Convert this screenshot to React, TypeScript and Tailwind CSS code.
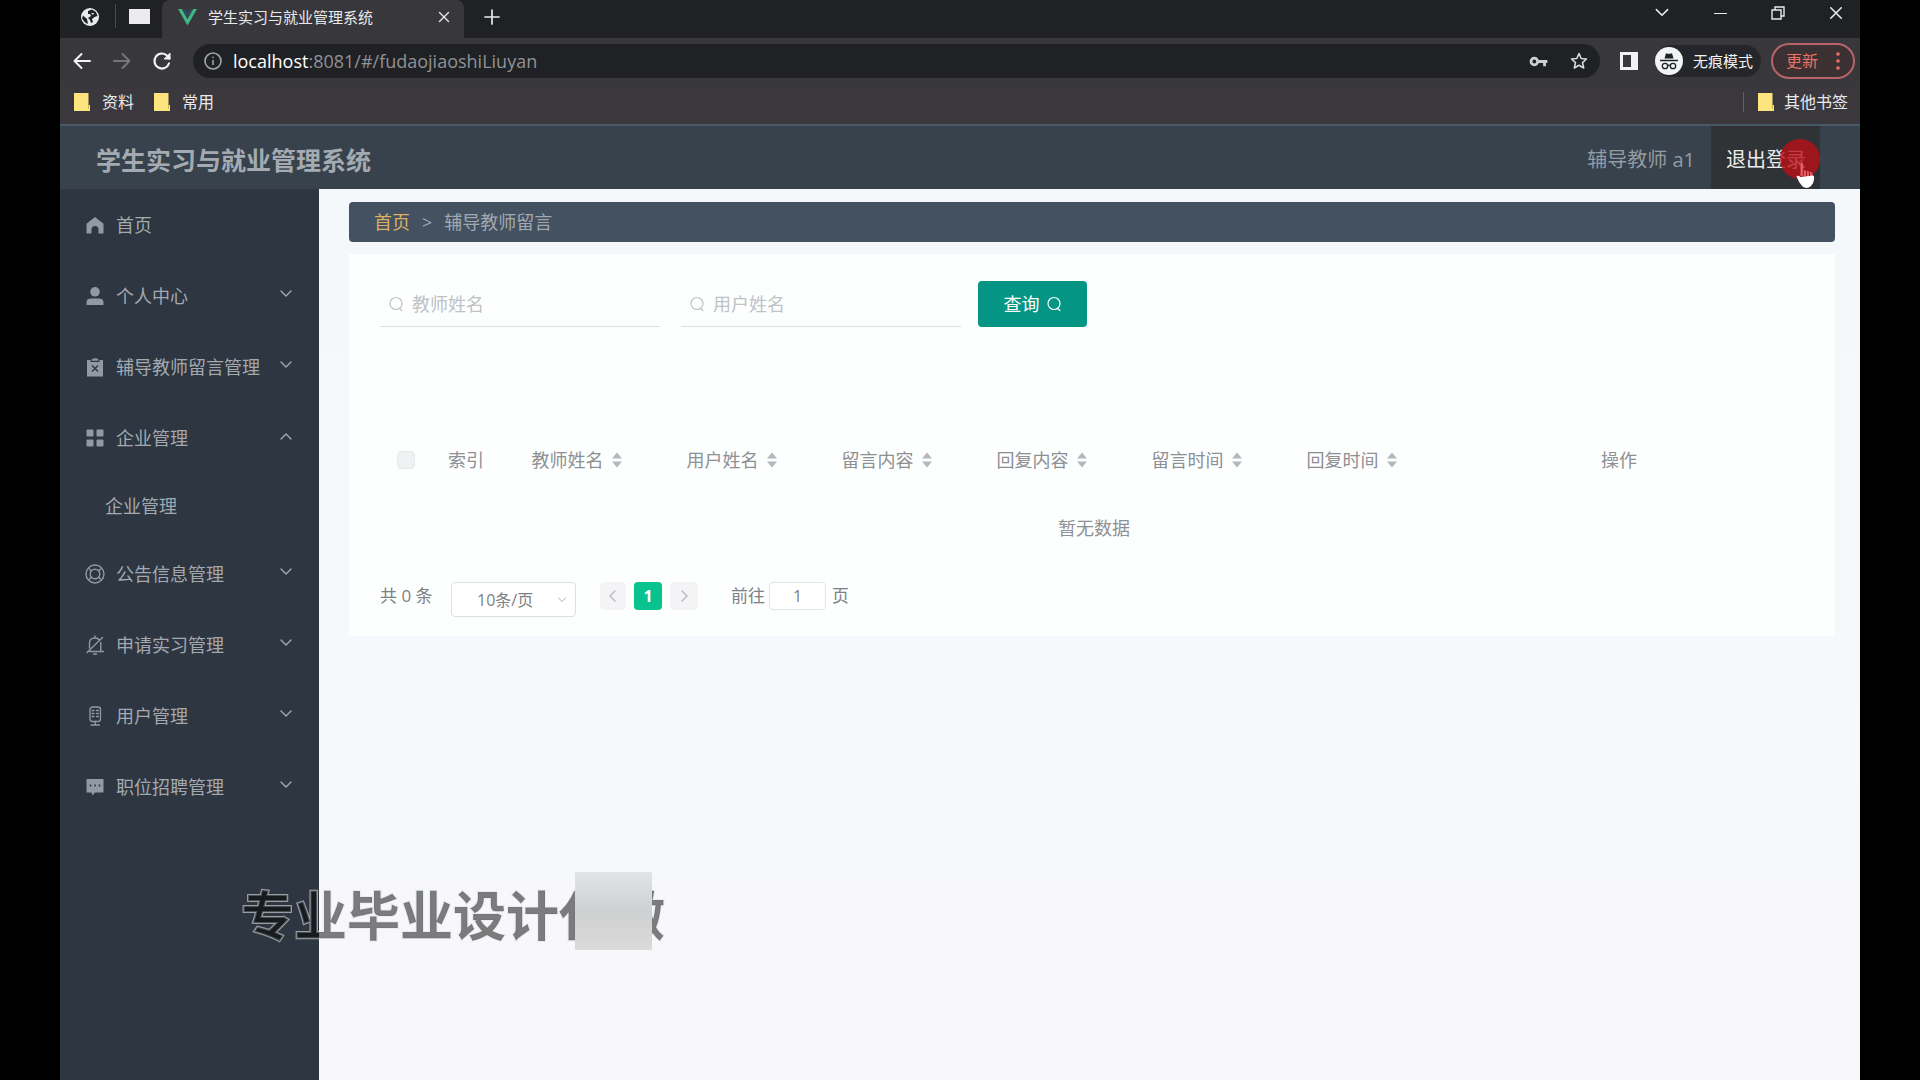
import React from "react";

type IconProps = { className?: string };

const svgBase = {
  fill: "none",
  stroke: "currentColor",
  strokeLinecap: "round" as const,
  strokeLinejoin: "round" as const,
  "aria-hidden": true,
};

function Chevron({ className = "", dir }: IconProps & { dir: "up" | "down" | "left" | "right" }) {
  const paths = {
    up: "M3 11l5-5 5 5",
    down: "M3 5l5 5 5-5",
    left: "M10 3L5 8l5 5",
    right: "M6 3l5 5-5 5",
  };
  return (
    <svg viewBox="0 0 16 16" {...svgBase} strokeWidth={1.4} className={className}>
      <path d={paths[dir]} />
    </svg>
  );
}

function GlobeIcon() {
  return (
    <svg viewBox="0 0 20 20" className="size-5" aria-hidden>
      <circle cx="10" cy="10" r="9" fill="#e8eaed" />
      <path d="M3 8.500l4 3.500 1 5-3-1.500-3-4z" fill="#202124" />
      <path d="M8 4l4-1.500 4 2.500 1.500 4-3 1-2.500 2 1 3-2 1-1-3-2-2 3-2-1-2h-2z" fill="#202124" />
      <path d="M11 6l3 0-1 2z" fill="#e8eaed" />
    </svg>
  );
}

function VueLogo() {
  return (
    <svg viewBox="0 0 20 18" className="h-[17px] w-[19px]" aria-hidden>
      <path d="M0 0h4l6 10.500L16 0h4L10 17.500z" fill="#41b883" />
      <path d="M4 0h3.600L10 4.200 12.400 0H16l-6 10.500z" fill="#35495e" />
    </svg>
  );
}

function CloseIcon({ className = "" }: IconProps) {
  return (
    <svg viewBox="0 0 16 16" {...svgBase} className={className} strokeWidth={1.8}>
      <path d="M2 2l12 12M14 2L2 14" />
    </svg>
  );
}

function SearchIcon({ className = "" }: IconProps) {
  return (
    <svg viewBox="0 0 16 16" {...svgBase} className={className} strokeWidth={1.2}>
      <circle cx="8" cy="7.500" r="6" />
      <path d="M11.500 12.500l2.500 2" />
    </svg>
  );
}

function HomeIcon() {
  return (
    <svg viewBox="0 0 18 18" className="size-[18px]" fill="currentColor" aria-hidden>
      <path d="M9 1L0.500 7.800V17.500H5.500V13.500Q5.500 10 9 10T12.500 13.500V17.500H17.500V7.800z" />
    </svg>
  );
}

function UserIcon() {
  return (
    <svg viewBox="0 0 18 18" className="size-[18px]" fill="currentColor" aria-hidden>
      <circle cx="9" cy="4.800" r="4.800" />
      <path d="M0.500 18v-2.500Q0.500 11.500 5 11.500h8q4.500 0 4.500 4V18z" />
    </svg>
  );
}

function ClipboardIcon() {
  return (
    <svg viewBox="0 0 18 20" className="h-5 w-[18px]" aria-hidden>
      <path d="M1 3h3.500v2h9V3H17v16.500H1z" fill="currentColor" />
      <path d="M5.500 3.800V2.500Q9 0 12.500 2.500v1.300z" fill="currentColor" />
      <path d="M6 8.500l6 6M12 8.500l-6 6" stroke="#2d3641" strokeWidth="1.400" />
    </svg>
  );
}

function GridIcon() {
  return (
    <svg viewBox="0 0 18 18" className="size-[18px]" fill="currentColor" aria-hidden>
      <rect x="0.500" y="0.500" width="7" height="7" rx="1" />
      <rect x="10.500" y="0.500" width="7" height="7" rx="1" />
      <rect x="0.500" y="10.500" width="7" height="7" rx="1" />
      <rect x="10.500" y="10.500" width="7" height="7" rx="1" />
    </svg>
  );
}

function HelpRingIcon() {
  return (
    <svg viewBox="0 0 20 20" {...svgBase} className="size-5" strokeWidth={1.4}>
      <circle cx="10" cy="10" r="9" />
      <circle cx="10" cy="10" r="4.800" />
      <path d="M4.500 5l2 2M15.500 5l-2 2M4.500 15l2-2M15.500 15l-2-2" />
    </svg>
  );
}

function MuteBellIcon() {
  return (
    <svg viewBox="0 0 18 20" {...svgBase} className="h-5 w-[18px]" strokeWidth={1.4}>
      <path d="M3.500 13V8.500Q3.500 3 9 3q3 0 4.500 2M14.800 7.500V16.500M3.500 16.500h14M9 1v2M7.500 19h3M16.500 2.500L1 17.500" />
    </svg>
  );
}

function MicIcon() {
  return (
    <svg viewBox="0 0 18 20" {...svgBase} className="h-5 w-[18px]" strokeWidth={1.3}>
      <rect x="4" y="1" width="10.500" height="14.500" rx="2.500" />
      <path d="M6 4.500h2M10.500 4.500h2M6 7.500h2M10.500 7.500h2M6 10.500h2M10.500 10.500h2M9.200 15.500v3.500M5 19h8.500" />
    </svg>
  );
}

function ChatIcon() {
  return (
    <svg viewBox="0 0 18 18" className="size-[18px]" aria-hidden>
      <path d="M0.500 1h17v13.500H9L6.500 17.500 5.500 14.500h-5z" fill="currentColor" />
      <path d="M4.500 6.500v2M9 6.500v2M13.500 6.500v2" stroke="#2d3641" strokeWidth="1.500" />
    </svg>
  );
}

function FolderIcon() {
  return (
    <svg viewBox="0 0 16 18" className="h-[18px] w-4" aria-hidden>
      <path d="M0 0h14.500v12H16v6H0z" fill="#fce57e" />
      <path d="M14.500 12v4" stroke="#d9b84a" strokeWidth="1" />
    </svg>
  );
}

function KeyIcon() {
  return (
    <svg viewBox="0 0 20 14" className="h-[13px] w-[19px]" aria-hidden>
      <circle cx="5.500" cy="7" r="3.600" fill="none" stroke="#d0d1d4" strokeWidth="3" />
      <path d="M10 5.500h9.500v3H18V12h-3V8.500h-5z" fill="#d0d1d4" />
    </svg>
  );
}

function StarIcon() {
  return (
    <svg viewBox="0 0 18 18" {...svgBase} className="size-[18px] text-[#d8d9dc]" strokeWidth={1.6}>
      <path d="M9 1.500l2.200 5 5.300.5-4 3.600 1.200 5.400L9 13.200 4.300 16l1.200-5.400-4-3.600 5.300-.5z" />
    </svg>
  );
}

function IncognitoIcon() {
  return (
    <svg viewBox="0 0 28 28" className="size-7" aria-hidden>
      <circle cx="14" cy="14" r="14" fill="#f1f3f4" />
      <path d="M9.500 11.500l1.500-5.300q3 1 6 0l1.500 5.300z" fill="#202124" />
      <path d="M5 13.500h18" stroke="#202124" strokeWidth="1.500" />
      <circle cx="10" cy="19" r="2.700" fill="none" stroke="#202124" strokeWidth="1.300" />
      <circle cx="18" cy="19" r="2.700" fill="none" stroke="#202124" strokeWidth="1.300" />
      <path d="M12.700 18.500q1.300-.8 2.600 0" fill="none" stroke="#202124" strokeWidth="1.200" />
    </svg>
  );
}

function SortCarets() {
  return (
    <svg viewBox="0 0 10 16" className="h-4 w-[10px] text-[#b4b8bd]" fill="currentColor" aria-hidden>
      <path d="M5 0.500l5 6H0zM5 15.500l5-6H0z" />
    </svg>
  );
}

function HandCursor() {
  return (
    <svg viewBox="0 0 20 28" className="h-7 w-5" aria-hidden>
      <path
        d="M5.500 15V3.500q0-2 1.300-2t1.300 2V10q2.500-1.500 3 .5 2.500-1.500 3 .8 3-1 3.400 1.200V16z"
        fill="#e0606a"
      />
      <path d="M8.300 10v5M11.500 10.500v4.500M14.500 11.500V15" stroke="#a8121c" strokeWidth="1" />
      <path
        d="M1.500 15.500q1.500-1.500 4 .5l12.500-1.500q1.500 0 1 4-.5 4.500-3 6.500Q12 28.500 7.500 25.500 4 22 1.500 15.500z"
        fill="#fff"
      />
    </svg>
  );
}

const menu = [
  { label: "首页", icon: <HomeIcon />, arrow: false },
  { label: "个人中心", icon: <UserIcon />, arrow: true },
  { label: "辅导教师留言管理", icon: <ClipboardIcon />, arrow: true },
  { label: "企业管理", icon: <GridIcon />, arrow: true, children: ["企业管理"] },
  { label: "公告信息管理", icon: <HelpRingIcon />, arrow: true },
  { label: "申请实习管理", icon: <MuteBellIcon />, arrow: true },
  { label: "用户管理", icon: <MicIcon />, arrow: true },
  { label: "职位招聘管理", icon: <ChatIcon />, arrow: true },
];

const columns = ["教师姓名", "用户姓名", "留言内容", "回复内容", "留言时间", "回复时间"];

function TabStrip() {
  return (
    <div className="flex h-[38px] bg-[#202124] text-[#e8eaed]">
      <button aria-label="网页" className="flex w-[55px] items-center justify-center pb-1 pl-1">
        <GlobeIcon />
      </button>
      <div className="mt-1 h-6 w-px bg-[#4a4b4f]" />
      <button aria-label="窗口" className="flex w-[46px] items-start justify-center pt-[9px]">
        <span className="h-[15px] w-[21px] bg-[#ececee]" />
      </button>
      <div className="flex w-[302px] items-center rounded-t-lg bg-[#38373b] pr-3 pb-1 pl-4">
        <VueLogo />
        <span className="ml-[11px] flex-1 text-[15px] leading-5 whitespace-nowrap">学生实习与就业管理系统</span>
        <button aria-label="关闭标签页" className="p-[2px]">
          <CloseIcon className="size-3" />
        </button>
      </div>
      <button aria-label="新标签页" className="flex w-[56px] items-center justify-center pb-1">
        <svg viewBox="0 0 16 16" {...svgBase} strokeWidth={1.7} className="size-4">
          <path d="M8 1v14M1 8h14" />
        </svg>
      </button>
      <div className="ml-auto flex pb-3">
        <button aria-label="搜索标签页" className="flex w-[58px] items-center justify-center">
          <Chevron dir="down" className="size-[18px]" />
        </button>
        <button aria-label="最小化" className="flex w-[58px] items-center justify-center">
          <span className="h-px w-[13px] bg-[#e8eaed]" />
        </button>
        <button aria-label="还原" className="flex w-[58px] items-center justify-center">
          <svg viewBox="0 0 14 14" fill="none" stroke="currentColor" strokeWidth={1.4} className="size-[14px]" aria-hidden>
            <path d="M1 4h9v9H1zM4 4V1h9v9h-3" />
          </svg>
        </button>
        <button aria-label="关闭" className="flex w-[53px] items-center justify-center pl-1">
          <CloseIcon className="size-[14px]" />
        </button>
      </div>
    </div>
  );
}

function Toolbar() {
  return (
    <div className="flex h-[46px] items-center bg-[#38373b] pr-[5px] pl-3 text-[#f1f3f4]">
      <div className="flex w-[121px] gap-5">
        <button aria-label="后退">
          <svg viewBox="0 0 20 20" {...svgBase} strokeWidth={2} className="size-5">
            <path d="M18 10H2.500M9.500 3l-7 7 7 7" />
          </svg>
        </button>
        <button aria-label="前进" className="text-[#77777b]">
          <svg viewBox="0 0 20 20" {...svgBase} strokeWidth={2} className="size-5">
            <path d="M2 10h15.500M10.500 3l7 7-7 7" />
          </svg>
        </button>
        <button aria-label="重新加载">
          <svg viewBox="0 0 20 20" {...svgBase} strokeWidth={2.200} className="size-5">
            <path d="M17 12.500A7.500 7.500 0 1 1 15.500 5L17.500 7.500" />
            <path d="M18 2.500V8h-5.500z" fill="currentColor" strokeWidth={1} />
          </svg>
        </button>
      </div>
      <div className="flex h-[34px] min-w-0 flex-1 items-center rounded-full bg-[#202124] pr-3 pl-[11px]">
        <svg viewBox="0 0 18 18" {...svgBase} strokeWidth={1.600} className="size-[18px] text-[#a3a4a8]">
          <circle cx="9" cy="9" r="8" />
          <path d="M9 8.500v4M9 5.300v.2" />
        </svg>
        <p className="ml-[11px] flex-1 font-['Open_Sans',sans-serif] text-lg leading-6 text-[#909195]">
          <span className="text-white">localhost</span>:8081/#/fudaojiaoshiLiuyan
        </p>
        <button aria-label="密码" className="mr-[22px]">
          <KeyIcon />
        </button>
        <button aria-label="收藏">
          <StarIcon />
        </button>
      </div>
      <button aria-label="侧边栏" className="ml-5">
        <svg viewBox="0 0 18 18" className="size-[18px]" aria-hidden>
          <path d="M0 0h18v18H0zM3 3v12h8V3z" fill="#f1f3f4" fillRule="evenodd" />
        </svg>
      </button>
      <button className="ml-[17px] flex h-8 items-center gap-[10px] rounded-full bg-[#252629] pr-2">
        <IncognitoIcon />
        <span className="text-[15px] leading-5">无痕模式</span>
      </button>
      <button className="ml-[10px] flex h-9 w-[84px] items-center justify-between rounded-full border-2 border-[#b8636b] bg-[#3b3132] pr-[13px] pl-[13px] text-[#ea7168]">
        <span className="text-base leading-5">更新</span>
        <svg viewBox="0 0 4 18" fill="currentColor" className="h-[18px] w-1" aria-hidden>
          <circle cx="2" cy="2" r="1.800" />
          <circle cx="2" cy="9" r="1.800" />
          <circle cx="2" cy="16" r="1.800" />
        </svg>
      </button>
    </div>
  );
}

function Bookmarks() {
  return (
    <div className="flex h-10 items-center bg-[#3a383d] pr-3 pb-1 pl-[14px] text-base leading-5 text-[#e8eaed]">
      <button className="flex items-center gap-3">
        <FolderIcon />
        资料
      </button>
      <button className="ml-5 flex items-center gap-3">
        <FolderIcon />
        常用
      </button>
      <div className="mr-[14px] ml-auto h-5 w-px bg-[#606166]" />
      <button className="flex items-center gap-[10px]">
        <FolderIcon />
        其他书签
      </button>
    </div>
  );
}

function AppHeader() {
  return (
    <header className="flex h-[65px] items-stretch border-t-2 border-[#485866] bg-[#38424d] pr-10 pl-9">
      <h1 className="flex items-center pt-1 text-[25px] leading-8 font-bold text-[#a3aab1]">学生实习与就业管理系统</h1>
      <span className="ml-auto flex items-center pt-1 pr-4 text-xl text-[#949ba2]">辅导教师 a1</span>
      <button className="relative flex w-[109px] items-center bg-[#303336] pt-1 pl-[15px] text-xl text-[#ececec]">
        退出登录
        <span className="absolute top-[13px] right-0 size-10 rounded-full bg-[#b90f17]/80" />
        <span className="absolute top-[35px] right-[5px]">
          <HandCursor />
        </span>
      </button>
    </header>
  );
}

function Sidebar() {
  return (
    <nav className="w-[259px] shrink-0 bg-[#2d3641] text-lg text-[#a4a9af]">
      <ul>
        {menu.map((item) => (
          <li key={item.label}>
            <button className="flex h-[71px] w-full items-center pr-[25px] pl-[25px]">
              <span className="flex w-5 justify-center text-[#9299a1]">{item.icon}</span>
              <span className="ml-[11px] flex-1 text-left leading-6">{item.label}</span>
              {item.arrow && <Chevron dir={item.children ? "up" : "down"} className="mb-1 size-4" />}
            </button>
            {item.children && (
              <ul>
                {item.children.map((child) => (
                  <li key={child}>
                    <a href="#/qiye" className="flex h-[65px] items-center pl-[45px]">
                      {child}
                    </a>
                  </li>
                ))}
              </ul>
            )}
          </li>
        ))}
      </ul>
    </nav>
  );
}

function SearchField({ label }: { label: string }) {
  return (
    <label className="flex h-[46px] w-[280px] items-center gap-2 border-b border-[#dcdfe2] pl-2 text-[#c0c3c7]">
      <SearchIcon className="size-4" />
      <input
        aria-label={label}
        placeholder={label}
        className="min-w-0 flex-1 bg-transparent text-lg leading-6 outline-none placeholder:text-[#bfc2c6]"
      />
    </label>
  );
}

function MessageTable() {
  return (
    <table className="mt-[98px] w-full table-fixed text-lg leading-6 text-[#8d9094]">
      <colgroup>
        <col className="w-[52px]" />
        <col className="w-[68px]" />
        {columns.map((c) => (
          <col key={c} className="w-[155px]" />
        ))}
        <col />
      </colgroup>
      <thead>
        <tr className="h-[70px]">
          <th>
            <input
              type="checkbox"
              disabled
              aria-label="全选"
              className="mx-auto block size-[18px] appearance-none rounded-sm border border-[#e6e9eb] bg-[#eff1f2]"
            />
          </th>
          <th className="font-normal">索引</th>
          {columns.map((c) => (
            <th key={c} className="pr-[2px] font-normal">
              <button className="flex w-full items-center justify-center gap-2">
                {c}
                <SortCarets />
              </button>
            </th>
          ))}
          <th className="font-normal">操作</th>
        </tr>
      </thead>
      <tbody>
        <tr className="h-[66px]">
          <td colSpan={9} className="text-center">
            暂无数据
          </td>
        </tr>
      </tbody>
    </table>
  );
}

function Pagination() {
  return (
    <div className="mt-[21px] flex h-[36px] items-start text-[17px] leading-7 text-[#7d8085]">
      <span className="w-[71px]">共 0 条</span>
      <div className="relative w-[125px]">
        <select
          aria-label="每页条数"
          className="h-[35px] w-full appearance-none rounded-sm border border-[#dcdfe4] bg-white pl-[25px] text-base leading-6 outline-none"
        >
          <option>10条/页</option>
        </select>
        <Chevron dir="down" className="pointer-events-none absolute top-3 right-2 size-3 text-[#c0c4cc]" />
      </div>
      <button aria-label="上一页" disabled className="ml-6 flex h-7 w-[26px] items-center justify-center rounded-sm bg-[#f4f4f6] text-[#b5b8be]">
        <Chevron dir="left" className="size-4" />
      </button>
      <button className="ml-2 h-7 w-7 rounded-sm bg-[#08c28f] text-base font-bold text-white">1</button>
      <button aria-label="下一页" disabled className="ml-2 flex h-7 w-[28px] items-center justify-center rounded-sm bg-[#f4f4f6] text-[#b5b8be]">
        <Chevron dir="right" className="size-4" />
      </button>
      <label className="ml-[33px] flex items-start">
        前往
        <input
          defaultValue="1"
          className="mr-[6px] ml-1 h-7 w-[57px] rounded-sm border border-[#e3e5e9] bg-white text-center text-base outline-none"
        />
        页
      </label>
    </div>
  );
}

function Watermark() {
  return (
    <div className="pointer-events-none absolute top-[872px] left-[181px] flex h-[78px] items-center">
      <span className="pt-2 text-[53px] leading-none font-bold whitespace-nowrap text-black/50 [paint-order:stroke_fill] [-webkit-text-stroke:2px_rgba(225,228,230,0.6)]">
        专业毕业设计代做
      </span>
      <span className="absolute top-0 left-[334px] h-[78px] w-[77px] bg-linear-to-b from-[#e2e4e5] via-[#cfd0d1] to-[#dadada]" />
    </div>
  );
}

export default function App() {
  return (
    <div className="min-h-screen bg-black px-[60px] font-['Open_Sans','Noto_Sans_CJK_SC',sans-serif]">
      <div className="relative flex min-h-screen flex-col">
        <TabStrip />
        <Toolbar />
        <Bookmarks />
        <AppHeader />
        <div className="flex flex-1">
          <Sidebar />
          <main className="min-w-0 flex-1 bg-linear-to-b from-[#f4f8fa] via-[#f6f9fb] to-[#f8f7fa] pt-[13px] pr-[25px] pl-[30px]">
            <nav aria-label="面包屑" className="flex h-10 items-center gap-3 rounded bg-[#445160] px-[25px] text-lg text-[#a2a8b0]">
              <a href="#/" className="text-[#deb068]">
                首页
              </a>
              <span>&gt;</span>
              <span>辅导教师留言</span>
            </nav>
            <section className="mt-3 bg-[#fdfefe] pt-[27px] pr-[27px] pb-[18px] pl-[31px]">
              <form className="flex items-start gap-[21px]" onSubmit={(e) => e.preventDefault()}>
                <SearchField label="教师姓名" />
                <SearchField label="用户姓名" />
                <button className="-ml-1 flex h-[46px] w-[109px] items-center justify-center gap-[6px] rounded bg-[#059584] text-lg text-white">
                  查询
                  <SearchIcon className="size-4" />
                </button>
              </form>
              <MessageTable />
              <Pagination />
            </section>
          </main>
        </div>
        <Watermark />
      </div>
    </div>
  );
}
